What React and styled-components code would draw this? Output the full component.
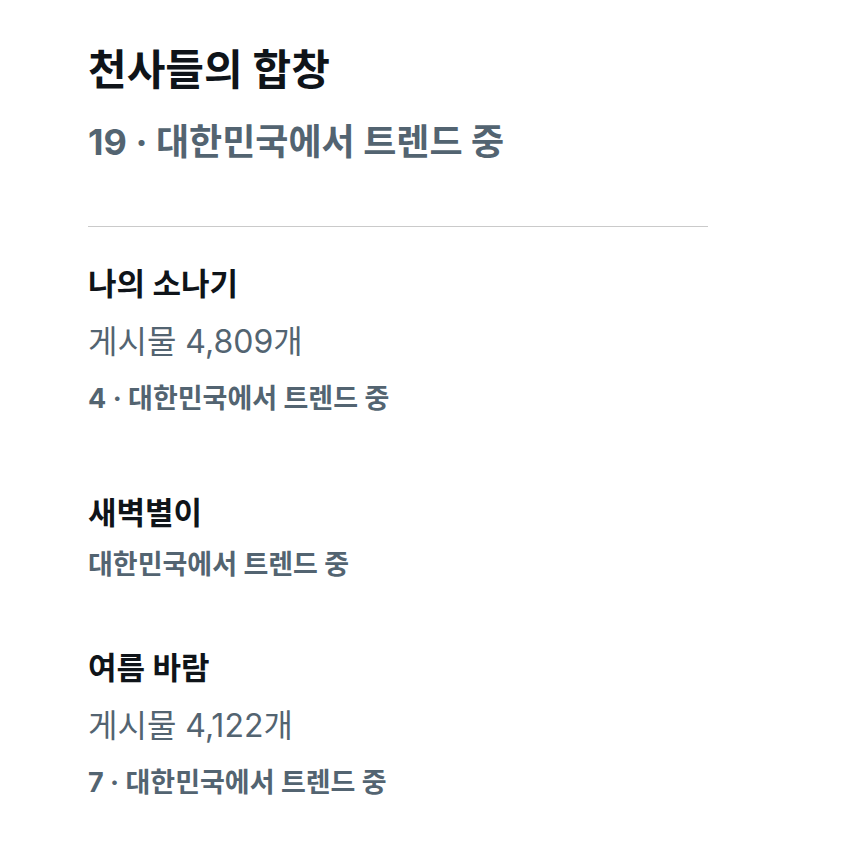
import React from 'react';
import styled, { createGlobalStyle } from 'styled-components';

const GlobalStyle = createGlobalStyle`
    body {
        margin: 0;
        background: #ffffff;
        font-family: Inter, "Noto Sans CJK KR", sans-serif;
    }
`;

const Page = styled.div`
    width: 855px;
    min-height: 858px;
    padding: 42px 0 0 88px;
    box-sizing: border-box;
`;

const Header = styled.div`
    width: 620px;
    display: flex;
    flex-direction: column;
    gap: 16px;
    padding-bottom: 56px;
    border-bottom: 1px solid #cacaca;
`;

const Title = styled.h1`
    margin: 0;
    font-size: 42px;
    line-height: 56px;
    font-weight: 700;
    color: #0f1419;
`;

const SubTitle = styled.div`
    font-size: 36px;
    line-height: 56px;
    font-weight: 700;
    color: #536471;
`;

const List = styled.div`
    display: flex;
    flex-direction: column;
    padding-top: 28px;
`;

const Item = styled.div`
    display: flex;
    flex-direction: column;
    margin-bottom: ${(p) => p.$gap}px;
`;

const ItemTitle = styled.div`
    font-size: 31px;
    line-height: 58px;
    font-weight: 700;
    color: #0f1419;
`;

const Meta = styled.div`
    font-size: 32px;
    line-height: 57px;
    font-weight: 400;
    color: #536471;
`;

const Trend = styled.div`
    font-size: 27px;
    line-height: 57px;
    font-weight: 700;
    color: #536471;
    margin-top: ${(p) => p.$pull || 0}px;
`;

const trends = [
    { title: '나의 소나기', posts: '게시물 4,809개', trend: '4 · 대한민국에서 트렌드 중', gap: 57 },
    { title: '새벽별이', trend: '대한민국에서 트렌드 중', gap: 46, pull: -6 },
    { title: '여름 바람', posts: '게시물 4,122개', trend: '7 · 대한민국에서 트렌드 중', gap: 0 },
];

export default function App() {
    return (
        <Page>
            <GlobalStyle />
            <Header>
                <Title>천사들의 합창</Title>
                <SubTitle>19 · 대한민국에서 트렌드 중</SubTitle>
            </Header>
            <List>
                {trends.map((t) => (
                    <Item key={t.title} $gap={t.gap}>
                        <ItemTitle>{t.title}</ItemTitle>
                        {t.posts && <Meta>{t.posts}</Meta>}
                        <Trend $pull={t.pull}>{t.trend}</Trend>
                    </Item>
                ))}
            </List>
        </Page>
    );
}
